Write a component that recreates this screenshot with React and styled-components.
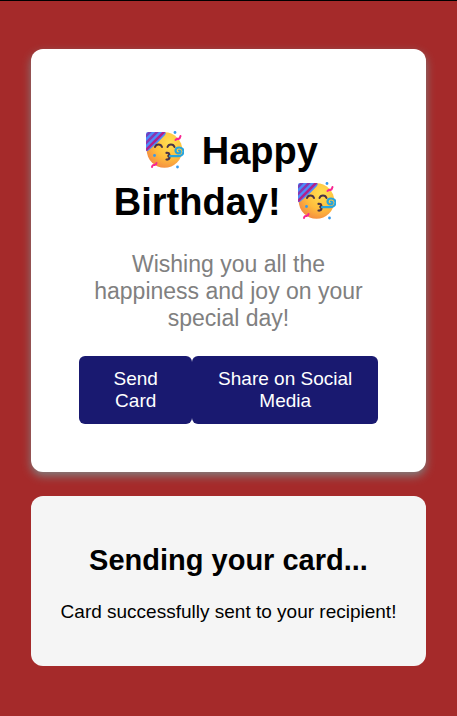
import React, { useId } from "react";
import styled, { createGlobalStyle } from "styled-components";

const GlobalStyle = createGlobalStyle`
  * { box-sizing: border-box; }
  body {
    margin: 0;
    background: brown;
    font-family: "Liberation Sans", Arial, sans-serif;
    border-top: 1px solid #000;
  }
`;

const Page = styled.main`
  display: flex;
  flex-direction: column;
  gap: 24px;
  padding: 48px 31px;
  text-align: center;
`;

const Card = styled.section`
  padding: 77px 48px 48px;
  background: #fff;
  border-radius: 12px;
  box-shadow: 0 4px 10px gray;
`;

const Title = styled.h1`
  margin: 0 0 23px;
  font-size: 38px;
  line-height: 51px;
`;

const EmojiIcon = styled.svg`
  width: 38px;
  height: 38px;
  margin: 0 7px;
  vertical-align: -5px;
`;

const Message = styled.p`
  margin: 0 0 24px;
  color: gray;
  font-size: 23px;
  line-height: 27px;
`;

const Actions = styled.div`
  display: flex;
  justify-content: space-between;
`;

const ActionButton = styled.button`
  padding: 12px 24px;
  border: 0;
  border-radius: 6px;
  background: midnightblue;
  color: #fff;
  font: 19px/22px "Liberation Sans", Arial, sans-serif;
  cursor: pointer;
`;

const Status = styled.section`
  padding: 48px 24px 43px;
  background: whitesmoke;
  border-radius: 12px;
`;

const StatusTitle = styled.h2`
  margin: 0 0 24px;
  font-size: 29px;
  line-height: 33px;
`;

const StatusText = styled.p`
  margin: 0;
  font-size: 19px;
  line-height: 22px;
`;

function PartyFace() {
  const id = useId();
  return (
    <EmojiIcon viewBox="0 0 38 38" role="img" aria-label="Partying face">
      <defs>
        <radialGradient id={`${id}face`} cx="0.65" cy="0.3" r="0.8">
          <stop offset="0" stopColor="#ffe052" />
          <stop offset="0.55" stopColor="#ffbd3c" />
          <stop offset="1" stopColor="#f28542" />
        </radialGradient>
        <clipPath id={`${id}hat`}>
          <path d="M2 1H18Q21 1 19 4Q12 12 3 19Q0 22 0 18V3Q0 1 2 1Z" />
        </clipPath>
      </defs>
      <circle cx="18.5" cy="19" r="17.8" fill={`url(#${id}face)`} />
      <g clipPath={`url(#${id}hat)`}>
        <path d="M0 0H24V24H0Z" fill="#4b8cfb" />
        <g fill="none" strokeWidth="2.6">
          <path d="M-2 7L7 -2" stroke="#7440bd" />
          <path d="M-2 14L14 -2" stroke="#8b36af" />
          <path d="M-2 21L21 -2" stroke="#b0208f" />
        </g>
      </g>
      <g fill="none" strokeLinecap="round">
        <path d="M9 16C10 12.5 15 12.5 16 16M21.5 16C22.5 12.5 27.5 12.5 28.5 16" stroke="#493347" strokeWidth="2" />
        <path d="M20.5 21.8C24 21.5 24 24.5 21.5 25C24.5 25.2 24 28.8 20.5 28.5" stroke="#493347" strokeWidth="2.2" />
        <path d="M24 25.2H32C39 25 39 16.5 33 16.5C28.5 16.5 28.5 22.3 32.5 22.3C35 22.3 35 19.5 33 19.5" stroke="#28a5dc" strokeWidth="2.2" />
        <path d="M29.5 9Q30.5 7.5 32.5 8Q34 7.5 34.5 5M6 36Q6.5 33.5 8.5 34Q10.5 33.5 10.5 32" stroke="#f82691" strokeWidth="2" />
      </g>
      <g fill="#3699ed">
        <circle cx="29" cy="1.5" r="1.4" />
        <circle cx="8.5" cy="24.5" r="1.4" />
        <circle cx="31.5" cy="36" r="1.4" />
      </g>
    </EmojiIcon>
  );
}

export default function App() {
  return (
    <>
      <GlobalStyle />
      <Page>
        <Card>
          <Title><PartyFace /> Happy Birthday! <PartyFace /></Title>
          <Message>Wishing you all the happiness and joy on your special day!</Message>
          <Actions>
            <ActionButton type="button">Send Card</ActionButton>
            <ActionButton type="button">Share on Social Media</ActionButton>
          </Actions>
        </Card>
        <Status role="status">
          <StatusTitle>Sending your card...</StatusTitle>
          <StatusText>Card successfully sent to your recipient!</StatusText>
        </Status>
      </Page>
    </>
  );
}
